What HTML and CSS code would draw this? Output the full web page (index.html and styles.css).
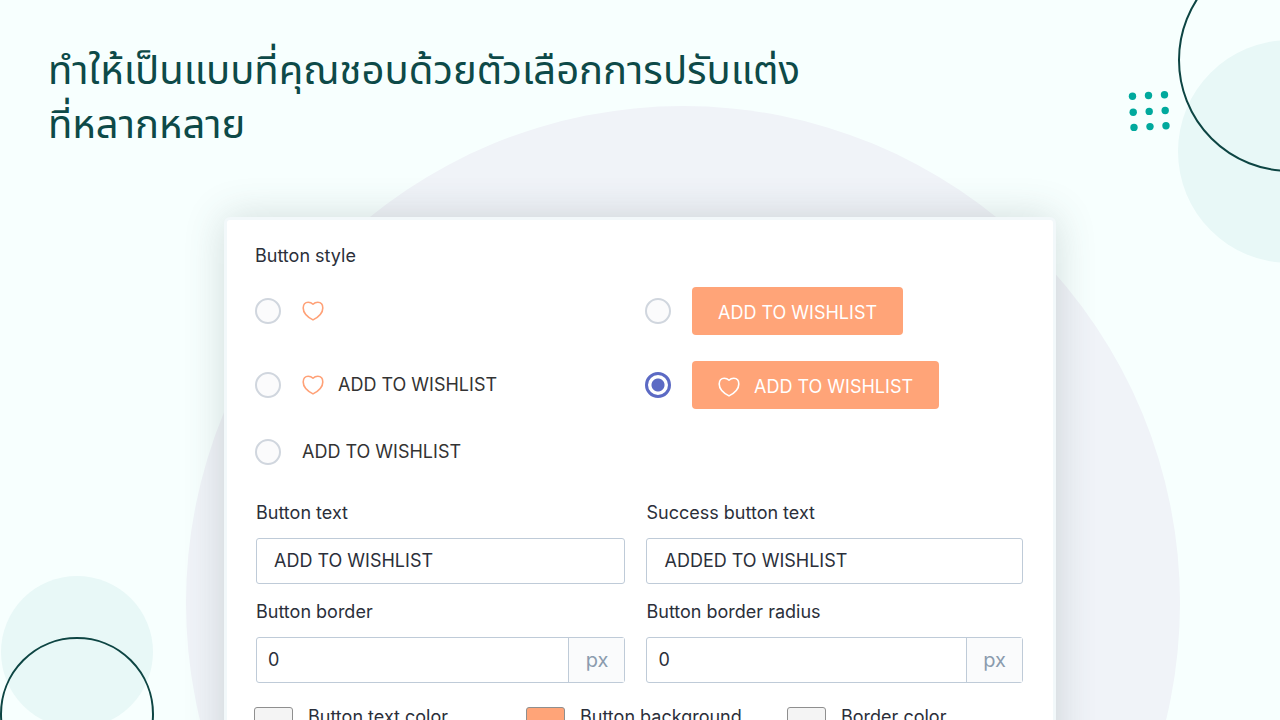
FILE: index.html
```html
<!DOCTYPE html>
<html lang="th">
<head>
<meta charset="utf-8">
<meta name="viewport" content="width=device-width, initial-scale=1">
<title>Wishlist button settings</title>
<link rel="stylesheet" href="styles.css">
</head>
<body>
<svg width="0" height="0" class="defs" aria-hidden="true">
  <symbol id="heart" viewBox="0 0 22 20">
    <path d="M11 3.200C9.400 1.600 8 1.200 6.200 1.200C3.200 1.200 1.200 3.400 1.200 6.900C1.200 12.200 5.400 15.900 11 18.900C16.600 15.900 20.800 12.200 20.800 6.900C20.800 3.400 18.800 1.200 15.800 1.200C14 1.200 12.600 1.600 11 3.200Z" fill="none" stroke="currentColor" stroke-width="1.600" stroke-linejoin="round"/>
  </symbol>
</svg>
<div class="page">
  <div class="disc disc-main"></div>
  <div class="disc disc-right"></div>
  <div class="ring ring-right"></div>
  <div class="disc disc-left"></div>
  <div class="ring ring-left"></div>
  <svg class="dots" viewBox="0 0 42 42" fill="#00a99d" aria-hidden="true">
    <circle cx="4.500" cy="6.300" r="3.700"/><circle cx="20.500" cy="5.500" r="3.700"/><circle cx="36.500" cy="4.700" r="3.700"/>
    <circle cx="5.200" cy="22.300" r="3.700"/><circle cx="21.200" cy="21.400" r="3.700"/><circle cx="37.200" cy="20.500" r="3.700"/>
    <circle cx="6" cy="37.400" r="3.700"/><circle cx="22" cy="36.600" r="3.700"/><circle cx="38" cy="35.800" r="3.700"/>
  </svg>

  <h1 class="title">ทำให้เป็นแบบที่คุณชอบด้วยตัวเลือกการปรับแต่ง<br>ที่หลากหลาย</h1>

  <form class="card">
    <fieldset class="styles">
      <legend class="label">Button style</legend>
      <div class="options">
        <label class="option"><input class="radio" type="radio" name="style" aria-label="Icon only"><svg class="heart" aria-hidden="true"><use href="#heart"/></svg></label>
        <label class="option"><input class="radio" type="radio" name="style"><span class="solid">ADD TO WISHLIST</span></label>
        <label class="option"><input class="radio" type="radio" name="style"><svg class="heart" aria-hidden="true"><use href="#heart"/></svg><span class="plain">ADD TO WISHLIST</span></label>
        <label class="option"><input class="radio" type="radio" name="style" checked><span class="solid"><svg class="heart" aria-hidden="true"><use href="#heart"/></svg>ADD TO WISHLIST</span></label>
        <label class="option"><input class="radio" type="radio" name="style"><span class="plain">ADD TO WISHLIST</span></label>
      </div>
    </fieldset>
    <div class="fields">
      <div class="field">
        <label class="label" for="text">Button text</label>
        <div class="box"><input class="input wide" id="text" type="text" value="ADD TO WISHLIST"></div>
      </div>
      <div class="field">
        <label class="label" for="success">Success button text</label>
        <div class="box"><input class="input wide" id="success" type="text" value="ADDED TO WISHLIST"></div>
      </div>
      <div class="field">
        <label class="label" for="border">Button border</label>
        <div class="box"><input class="input" id="border" type="text" value="0"><span class="unit">px</span></div>
      </div>
      <div class="field">
        <label class="label" for="radius">Button border radius</label>
        <div class="box"><input class="input" id="radius" type="text" value="0"><span class="unit">px</span></div>
      </div>
    </div>
    <div class="colors">
      <div class="color"><button class="swatch" id="c1" type="button"></button><label class="label" for="c1">Button text color</label></div>
      <div class="color"><button class="swatch orange" id="c2" type="button"></button><label class="label" for="c2">Button background</label></div>
      <div class="color"><button class="swatch" id="c3" type="button"></button><label class="label" for="c3">Border color</label></div>
    </div>
  </form>
</div>
</body>
</html>
```
FILE: styles.css
```css
* { box-sizing: border-box; }

body {
  margin: 0;
  font-family: Inter, "Liberation Sans", sans-serif;
  font-size: 18px;
  line-height: 24px;
  color: #2b2f3a;
}

.defs { position: absolute; }

.page {
  position: relative;
  height: 100vh;
  overflow: hidden;
  background: #f7fffe;
  padding-top: 45px;
}

/* background shapes */
.disc, .ring { position: absolute; border-radius: 50%; }
.disc { background: #e8f8f7; }
.ring { border: 2px solid #0d4543; }
.disc-main { left: 186px; top: 106px; width: 994px; height: 994px; background: #f0f3f8; }
.disc-right { right: -121px; top: 40px; width: 223px; height: 223px; }
.ring-right { right: -122px; top: -52px; width: 224px; height: 224px; }
.disc-left { left: 1px; top: 576px; width: 152px; height: 152px; }
.ring-left { left: 0; top: 637px; width: 154px; height: 154px; }
.dots { position: absolute; right: 110px; top: 90px; width: 42px; height: 42px; }

.title {
  position: relative;
  margin: 0 48px;
  font-family: "Noto Sans Thai", "Noto Sans", sans-serif;
  font-size: 40px;
  line-height: 54px;
  font-weight: 400;
  color: #0d4a48;
}

.card {
  position: relative;
  width: 65%;
  height: 700px;
  margin: 64px auto 0;
  padding: 24px 30px 0 28px;
  border: 3px solid #f2f8fa;
  border-radius: 6px;
  background: #fff;
  box-shadow: 0 0 40px rgba(60, 80, 80, 0.2);
}

.label { display: block; padding: 0; }

.styles { margin: 0; padding: 0; border: 0; min-width: 0; }

.options {
  display: grid;
  grid-template-columns: 390px 1fr;
  grid-template-rows: 48px 48px 34px;
  row-gap: 26px;
  padding-top: 19px;
}

.option { display: flex; align-items: center; }

.radio {
  appearance: none;
  width: 26px;
  height: 26px;
  margin: 0 21px 0 0;
  border: 2px solid #d0d6de;
  border-radius: 50%;
  background: #fbfbfc;
}
.radio:checked {
  border: 3px solid #5c6ac4;
  background: radial-gradient(circle, #5c6ac4 6px, #fff 7px);
}

.heart { width: 22px; height: 20px; color: #ffa177; }

.plain { color: #333; }
.heart + .plain { margin-left: 14px; }

.solid {
  display: flex;
  align-items: center;
  gap: 14px;
  height: 48px;
  padding: 3px 26px 0;
  border-radius: 4px;
  background: #ffa478;
  color: #fff;
}
.solid .heart { color: #fff; }

.fields {
  display: grid;
  grid-template-columns: 369fr 376fr;
  gap: 16px 21px;
  margin-left: 1px;
  padding-top: 32px;
}

.box {
  display: flex;
  height: 46px;
  margin-top: 13px;
  border: 1px solid #bfcbd8;
  border-radius: 3px;
}

.input {
  flex: 1;
  min-width: 0;
  padding: 0 11px;
  border: 0;
  background: none;
  font: inherit;
  color: inherit;
}
.input.wide { padding: 0 17px; }

.unit {
  display: flex;
  align-items: center;
  justify-content: center;
  width: 56px;
  border-left: 1px solid #bfcbd8;
  background: #fafbfc;
  font-size: 20px;
  color: #8b9bae;
}

.colors {
  display: grid;
  grid-template-columns: 272px 261px 1fr;
  margin-left: -1px;
  padding-top: 22px;
}

.color { display: flex; align-items: center; gap: 15px; }

.swatch {
  width: 39px;
  height: 20px;
  padding: 0;
  border: 1px solid #8f8f8f;
  border-radius: 3px;
  background: #f4f4f4;
}
.swatch.orange { background: #ffa478; }
```
